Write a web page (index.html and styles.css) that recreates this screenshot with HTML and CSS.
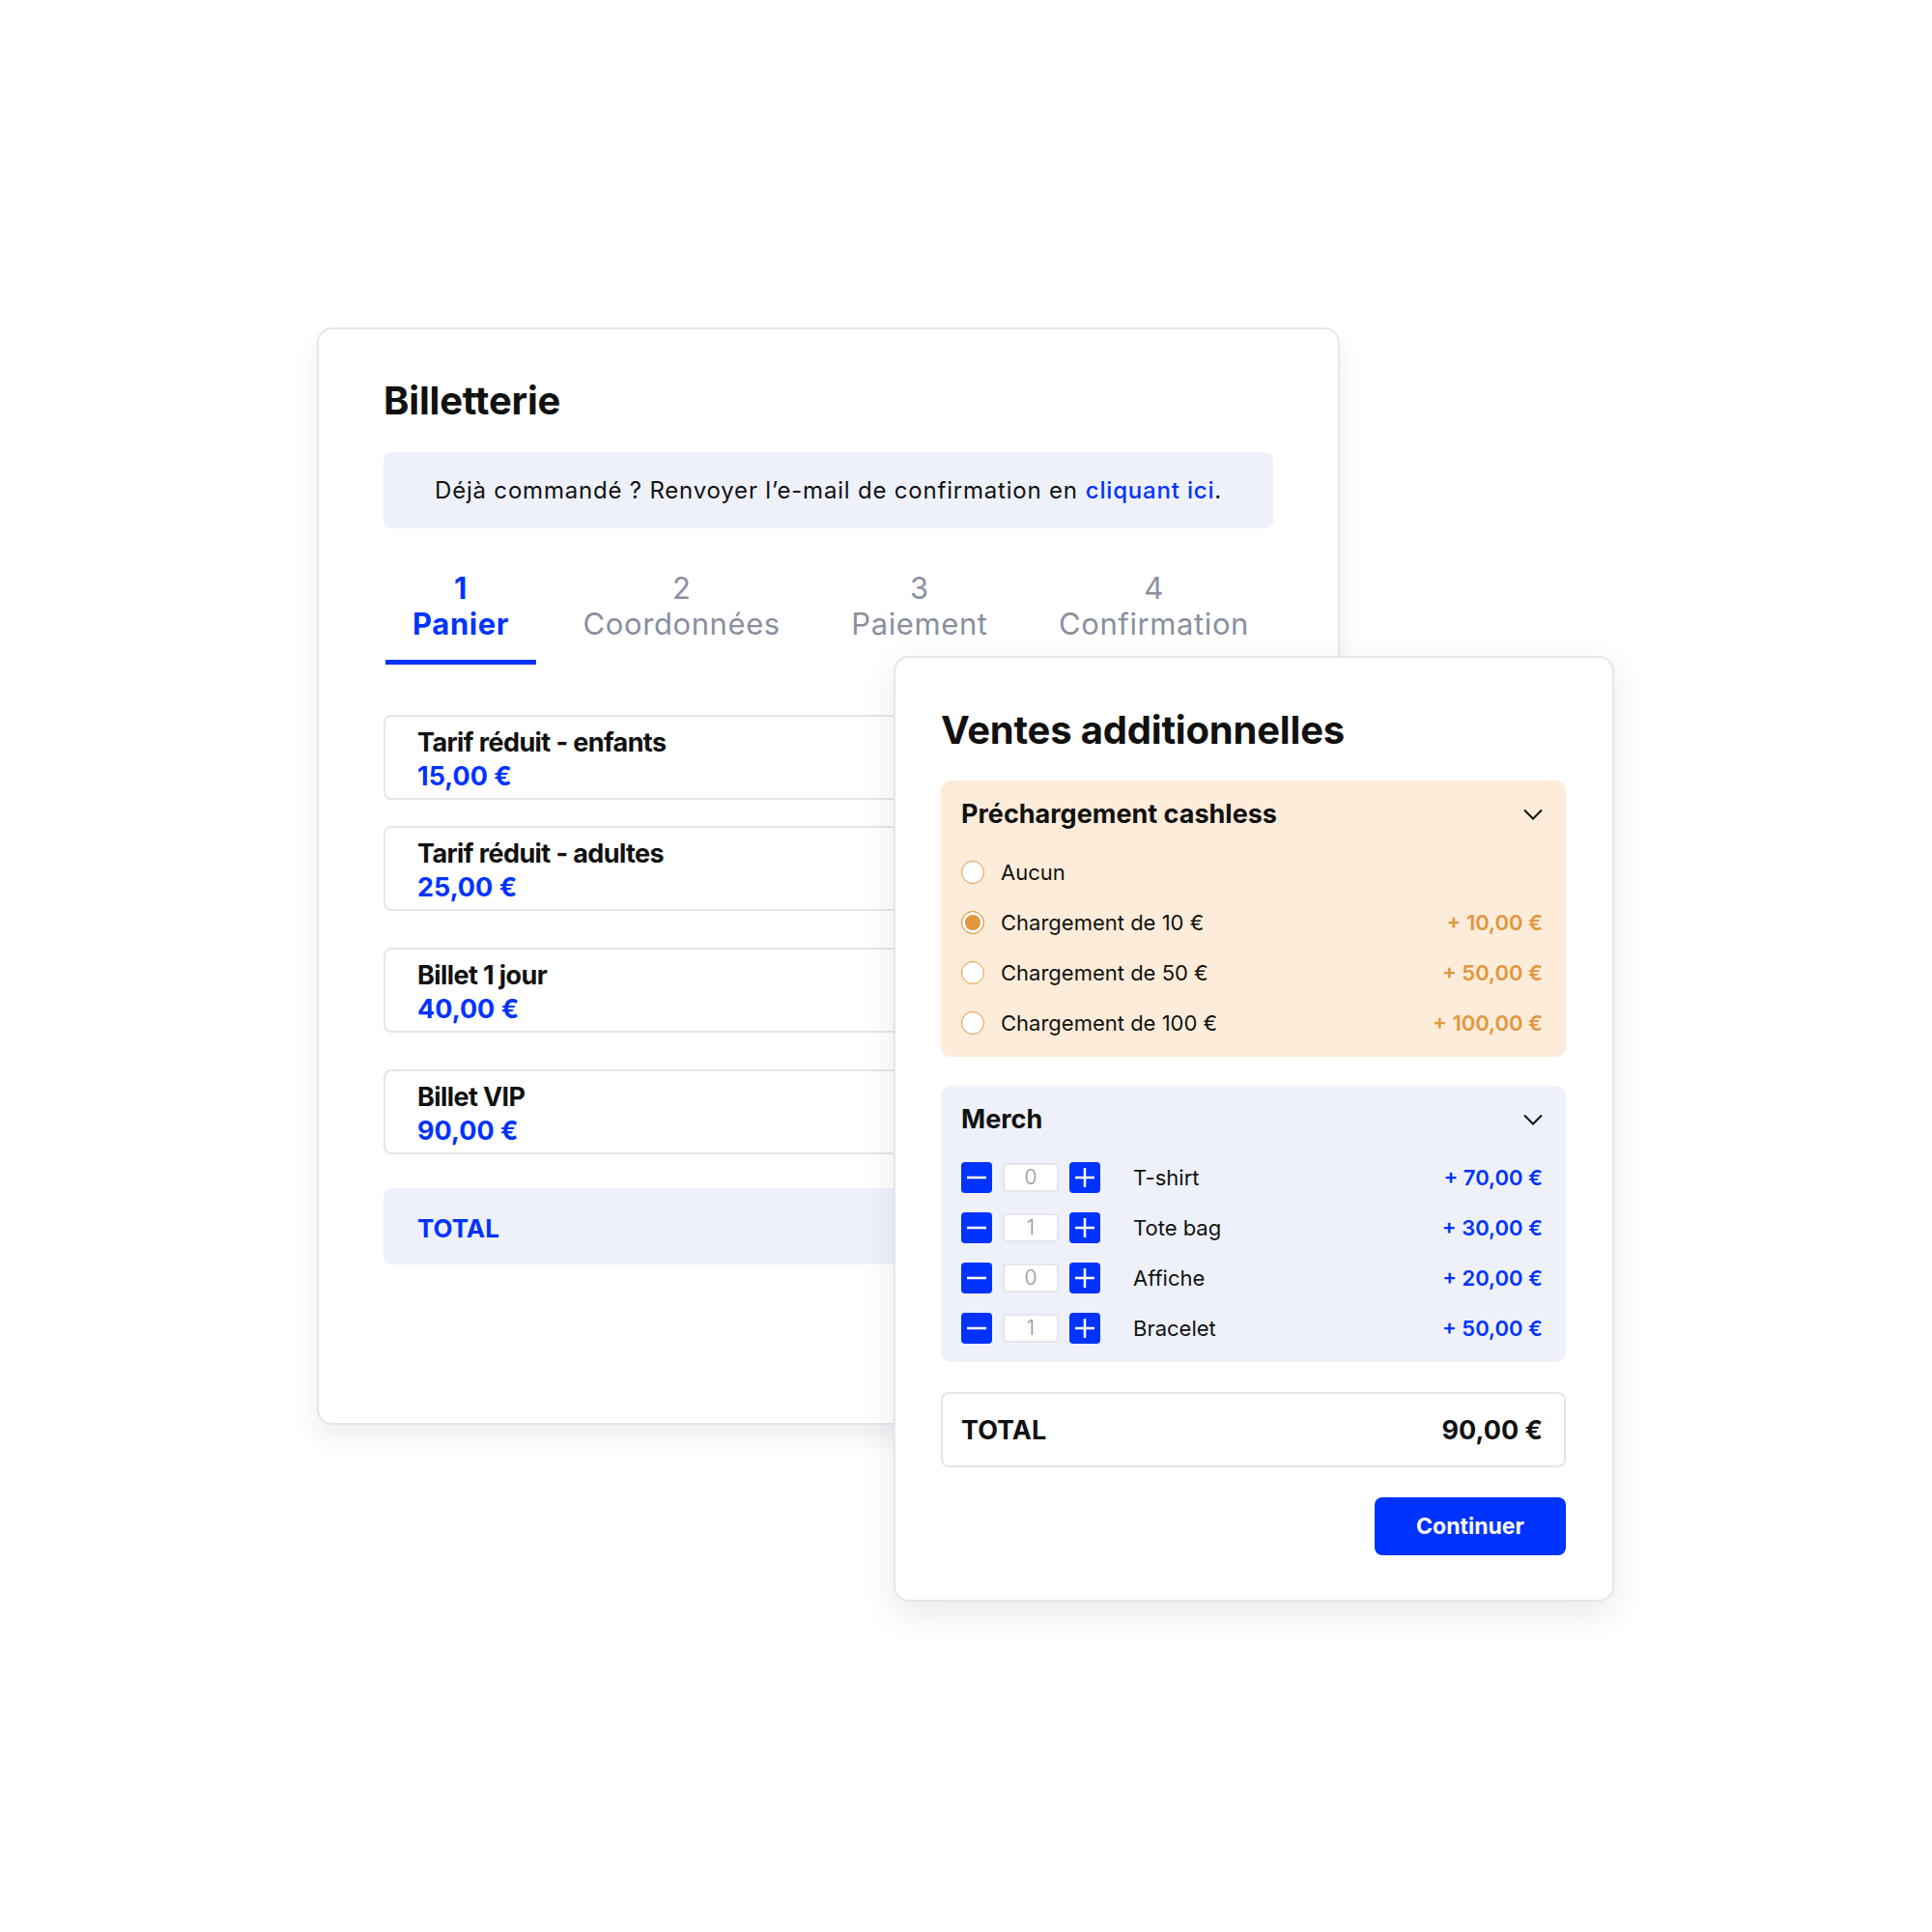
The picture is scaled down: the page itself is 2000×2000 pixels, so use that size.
FILE: index.html
```html
<!DOCTYPE html>
<html>
<head>
  <title>Billetterie</title>
  <meta charset="utf-8">
  <link rel="stylesheet" href="styles.css">
</head>
<body>

  <div class="stage">

    <section class="card card--tickets">
      <h1 class="card-title">Billetterie</h1>

      <p class="notice">
        Déjà commandé ? Renvoyer l’e-mail de confirmation en <a href="#">cliquant ici</a>.
      </p>

      <ul class="steps">
        <li class="step step--active"><span>1</span><span>Panier</span></li>
        <li class="step"><span>2</span><span>Coordonnées</span></li>
        <li class="step"><span>3</span><span>Paiement</span></li>
        <li class="step"><span>4</span><span>Confirmation</span></li>
      </ul>

      <div class="tickets">
        <div class="ticket-group">
          <div class="ticket">
            <div class="ticket-name">Tarif réduit - enfants</div>
            <div class="ticket-price">15,00 €</div>
          </div>
          <div class="ticket">
            <div class="ticket-name">Tarif réduit - adultes</div>
            <div class="ticket-price">25,00 €</div>
          </div>
        </div>
        <div class="ticket">
          <div class="ticket-name">Billet 1 jour</div>
          <div class="ticket-price">40,00 €</div>
        </div>
        <div class="ticket">
          <div class="ticket-name">Billet VIP</div>
          <div class="ticket-price">90,00 €</div>
        </div>
        <div class="ticket-total">TOTAL</div>
      </div>
    </section>

    <section class="card card--extras">
      <h2 class="card-title">Ventes additionnelles</h2>

      <div class="panel panel--cashless">
        <div class="panel-head">
          <span>Préchargement cashless</span>
          <svg class="chevron" width="20" height="12" viewBox="0 0 20 12"><path d="M1 1.5l9 9 9-9" fill="none" stroke="#111" stroke-width="2"/></svg>
        </div>
        <label class="option">
          <span class="radio"></span>
          <span class="option-label">Aucun</span>
        </label>
        <label class="option">
          <span class="radio radio--checked"></span>
          <span class="option-label">Chargement de 10 €</span>
          <span class="option-price">+ 10,00 €</span>
        </label>
        <label class="option">
          <span class="radio"></span>
          <span class="option-label">Chargement de 50 €</span>
          <span class="option-price">+ 50,00 €</span>
        </label>
        <label class="option">
          <span class="radio"></span>
          <span class="option-label">Chargement de 100 €</span>
          <span class="option-price">+ 100,00 €</span>
        </label>
      </div>

      <div class="panel panel--merch">
        <div class="panel-head">
          <span>Merch</span>
          <svg class="chevron" width="20" height="12" viewBox="0 0 20 12"><path d="M1 1.5l9 9 9-9" fill="none" stroke="#111" stroke-width="2"/></svg>
        </div>
        <div class="option">
          <span class="qty-btn"><svg width="32" height="32" viewBox="0 0 32 32"><path d="M6 16h20" stroke="#fff" stroke-width="2.5"/></svg></span>
          <span class="qty">0</span>
          <span class="qty-btn"><svg width="32" height="32" viewBox="0 0 32 32"><path d="M6 16h20M16 6v20" stroke="#fff" stroke-width="2.5"/></svg></span>
          <span class="option-label merch-label">T-shirt</span>
          <span class="option-price">+ 70,00 €</span>
        </div>
        <div class="option">
          <span class="qty-btn"><svg width="32" height="32" viewBox="0 0 32 32"><path d="M6 16h20" stroke="#fff" stroke-width="2.5"/></svg></span>
          <span class="qty">1</span>
          <span class="qty-btn"><svg width="32" height="32" viewBox="0 0 32 32"><path d="M6 16h20M16 6v20" stroke="#fff" stroke-width="2.5"/></svg></span>
          <span class="option-label merch-label">Tote bag</span>
          <span class="option-price">+ 30,00 €</span>
        </div>
        <div class="option">
          <span class="qty-btn"><svg width="32" height="32" viewBox="0 0 32 32"><path d="M6 16h20" stroke="#fff" stroke-width="2.5"/></svg></span>
          <span class="qty">0</span>
          <span class="qty-btn"><svg width="32" height="32" viewBox="0 0 32 32"><path d="M6 16h20M16 6v20" stroke="#fff" stroke-width="2.5"/></svg></span>
          <span class="option-label merch-label">Affiche</span>
          <span class="option-price">+ 20,00 €</span>
        </div>
        <div class="option">
          <span class="qty-btn"><svg width="32" height="32" viewBox="0 0 32 32"><path d="M6 16h20" stroke="#fff" stroke-width="2.5"/></svg></span>
          <span class="qty">1</span>
          <span class="qty-btn"><svg width="32" height="32" viewBox="0 0 32 32"><path d="M6 16h20M16 6v20" stroke="#fff" stroke-width="2.5"/></svg></span>
          <span class="option-label merch-label">Bracelet</span>
          <span class="option-price">+ 50,00 €</span>
        </div>
      </div>

      <div class="total">
        <span>TOTAL</span>
        <span>90,00 €</span>
      </div>

      <div class="actions">
        <button class="button">Continuer</button>
      </div>
    </section>

  </div>

</body>
</html>
```

FILE: styles.css
```css
* {
  box-sizing: border-box;
}
html, body {
  background: white;
  margin: 0;
}
body {
  color: #111;
  font-family: Inter, "Noto Sans", sans-serif;
}
.stage {
  height: 2000px;
  position: relative;
  width: 2000px;
}

/* cards are windows on the canvas */
.card {
  background: white;
  border: 2px solid #e4e6ec;
  border-radius: 16px;
  position: absolute;
}
.card--tickets {
  box-shadow: 0 14px 24px rgba(30, 40, 70, .08);
  height: 1136px;
  left: 328px;
  padding: 50px 67px 0;
  top: 339px;
  width: 1059px;
}
.card--extras {
  box-shadow: 0 12px 34px rgba(30, 40, 70, .10);
  height: 979px;
  left: 925px;
  padding: 51px 48px 0 47px;
  top: 679px;
  width: 746px;
}
.card-title {
  font-size: 40px;
  font-weight: 700;
  letter-spacing: -.2px;
  line-height: 48px;
  margin: 0;
}
.card--extras .card-title {
  margin-bottom: -2px;
}

.notice {
  align-items: center;
  background: #eef1fa;
  border-radius: 8px;
  display: flex;
  font-size: 24px;
  height: 79px;
  justify-content: center;
  letter-spacing: .8px;
  margin: 29px 0 0;
}
.notice a {
  color: #0033ff;
  font-weight: 500;
  margin-left: 8px;
  text-decoration: none;
}

.steps {
  display: flex;
  justify-content: space-between;
  list-style: none;
  margin: 43px 0 0;
  padding: 0;
}
.step {
  border-bottom: 5px solid transparent;
  color: #8a8fa0;
  display: flex;
  flex-direction: column;
  font-size: 31px;
  letter-spacing: .6px;
  line-height: 37px;
  padding: 0 25px 19px;
  text-align: center;
}
.step--active {
  border-bottom-color: #0033ff;
  color: #0033ff;
  font-weight: 700;
  margin-left: 2px;
  padding: 0 28px 19px;
}

.tickets {
  display: flex;
  flex-direction: column;
  gap: 38px;
  margin-top: 52px;
}
.ticket-group {
  display: flex;
  flex-direction: column;
  gap: 27px;
}
.ticket {
  border: 2px solid #e4e6ec;
  border-radius: 8px;
  font-size: 27px;
  font-weight: 700;
  line-height: 35px;
  padding: 9px 33px 5px;
}
.ticket-name {
  letter-spacing: -.6px;
}
.ticket-price {
  color: #0033ff;
}
.ticket-total {
  align-items: center;
  background: #eef1fa;
  border-radius: 8px;
  color: #0033ff;
  display: flex;
  font-size: 26px;
  font-weight: 700;
  height: 79px;
  margin-top: -3px;
  padding: 4px 35px 0;
}

.panel {
  border-radius: 10px;
  margin-top: 30px;
  padding: 17px 24px 9px 21px;
}
.panel--cashless {
  background: #fdecd9;
}
.panel--merch {
  background: #eef1fa;
}
.panel-head {
  align-items: center;
  display: flex;
  font-size: 27px;
  font-weight: 700;
  justify-content: space-between;
  line-height: 35px;
  margin-bottom: 17px;
}
.option {
  align-items: center;
  display: flex;
  font-size: 22px;
  height: 52px;
}
.option-label {
  flex: 1;
  margin-left: 17px;
}
.option-price {
  color: #e2963c;
  font-weight: 600;
}
.panel--merch .option-price {
  color: #0033ff;
}
.radio {
  background: white;
  border: 1.5px solid #e2963c;
  border-radius: 50%;
  height: 24px;
  width: 24px;
}
.radio--checked {
  background: #e2963c;
  box-shadow: inset 0 0 0 3px white;
}
.qty-btn {
  background: #0033ff;
  border-radius: 4px;
  display: block;
  height: 32px;
  width: 32px;
}
.qty-btn svg {
  display: block;
}
.qty {
  background: white;
  border: 2px solid #e4e6ec;
  border-radius: 4px;
  color: #9297a6;
  font-size: 21px;
  font-weight: 300;
  height: 30px;
  line-height: 26px;
  margin: 0 11px;
  text-align: center;
  width: 58px;
}
.merch-label {
  margin-left: 34px;
}

.total {
  align-items: center;
  border: 2px solid #e4e6ec;
  border-radius: 8px;
  display: flex;
  font-size: 27px;
  font-weight: 700;
  height: 78px;
  justify-content: space-between;
  margin-top: 31px;
  padding: 0 22px 0 19px;
}
.actions {
  display: flex;
  justify-content: flex-end;
  margin-top: 31px;
}
.button {
  background: #0033ff;
  border: none;
  border-radius: 8px;
  color: white;
  font-family: inherit;
  font-size: 23px;
  font-weight: 700;
  height: 60px;
  width: 198px;
}
```
